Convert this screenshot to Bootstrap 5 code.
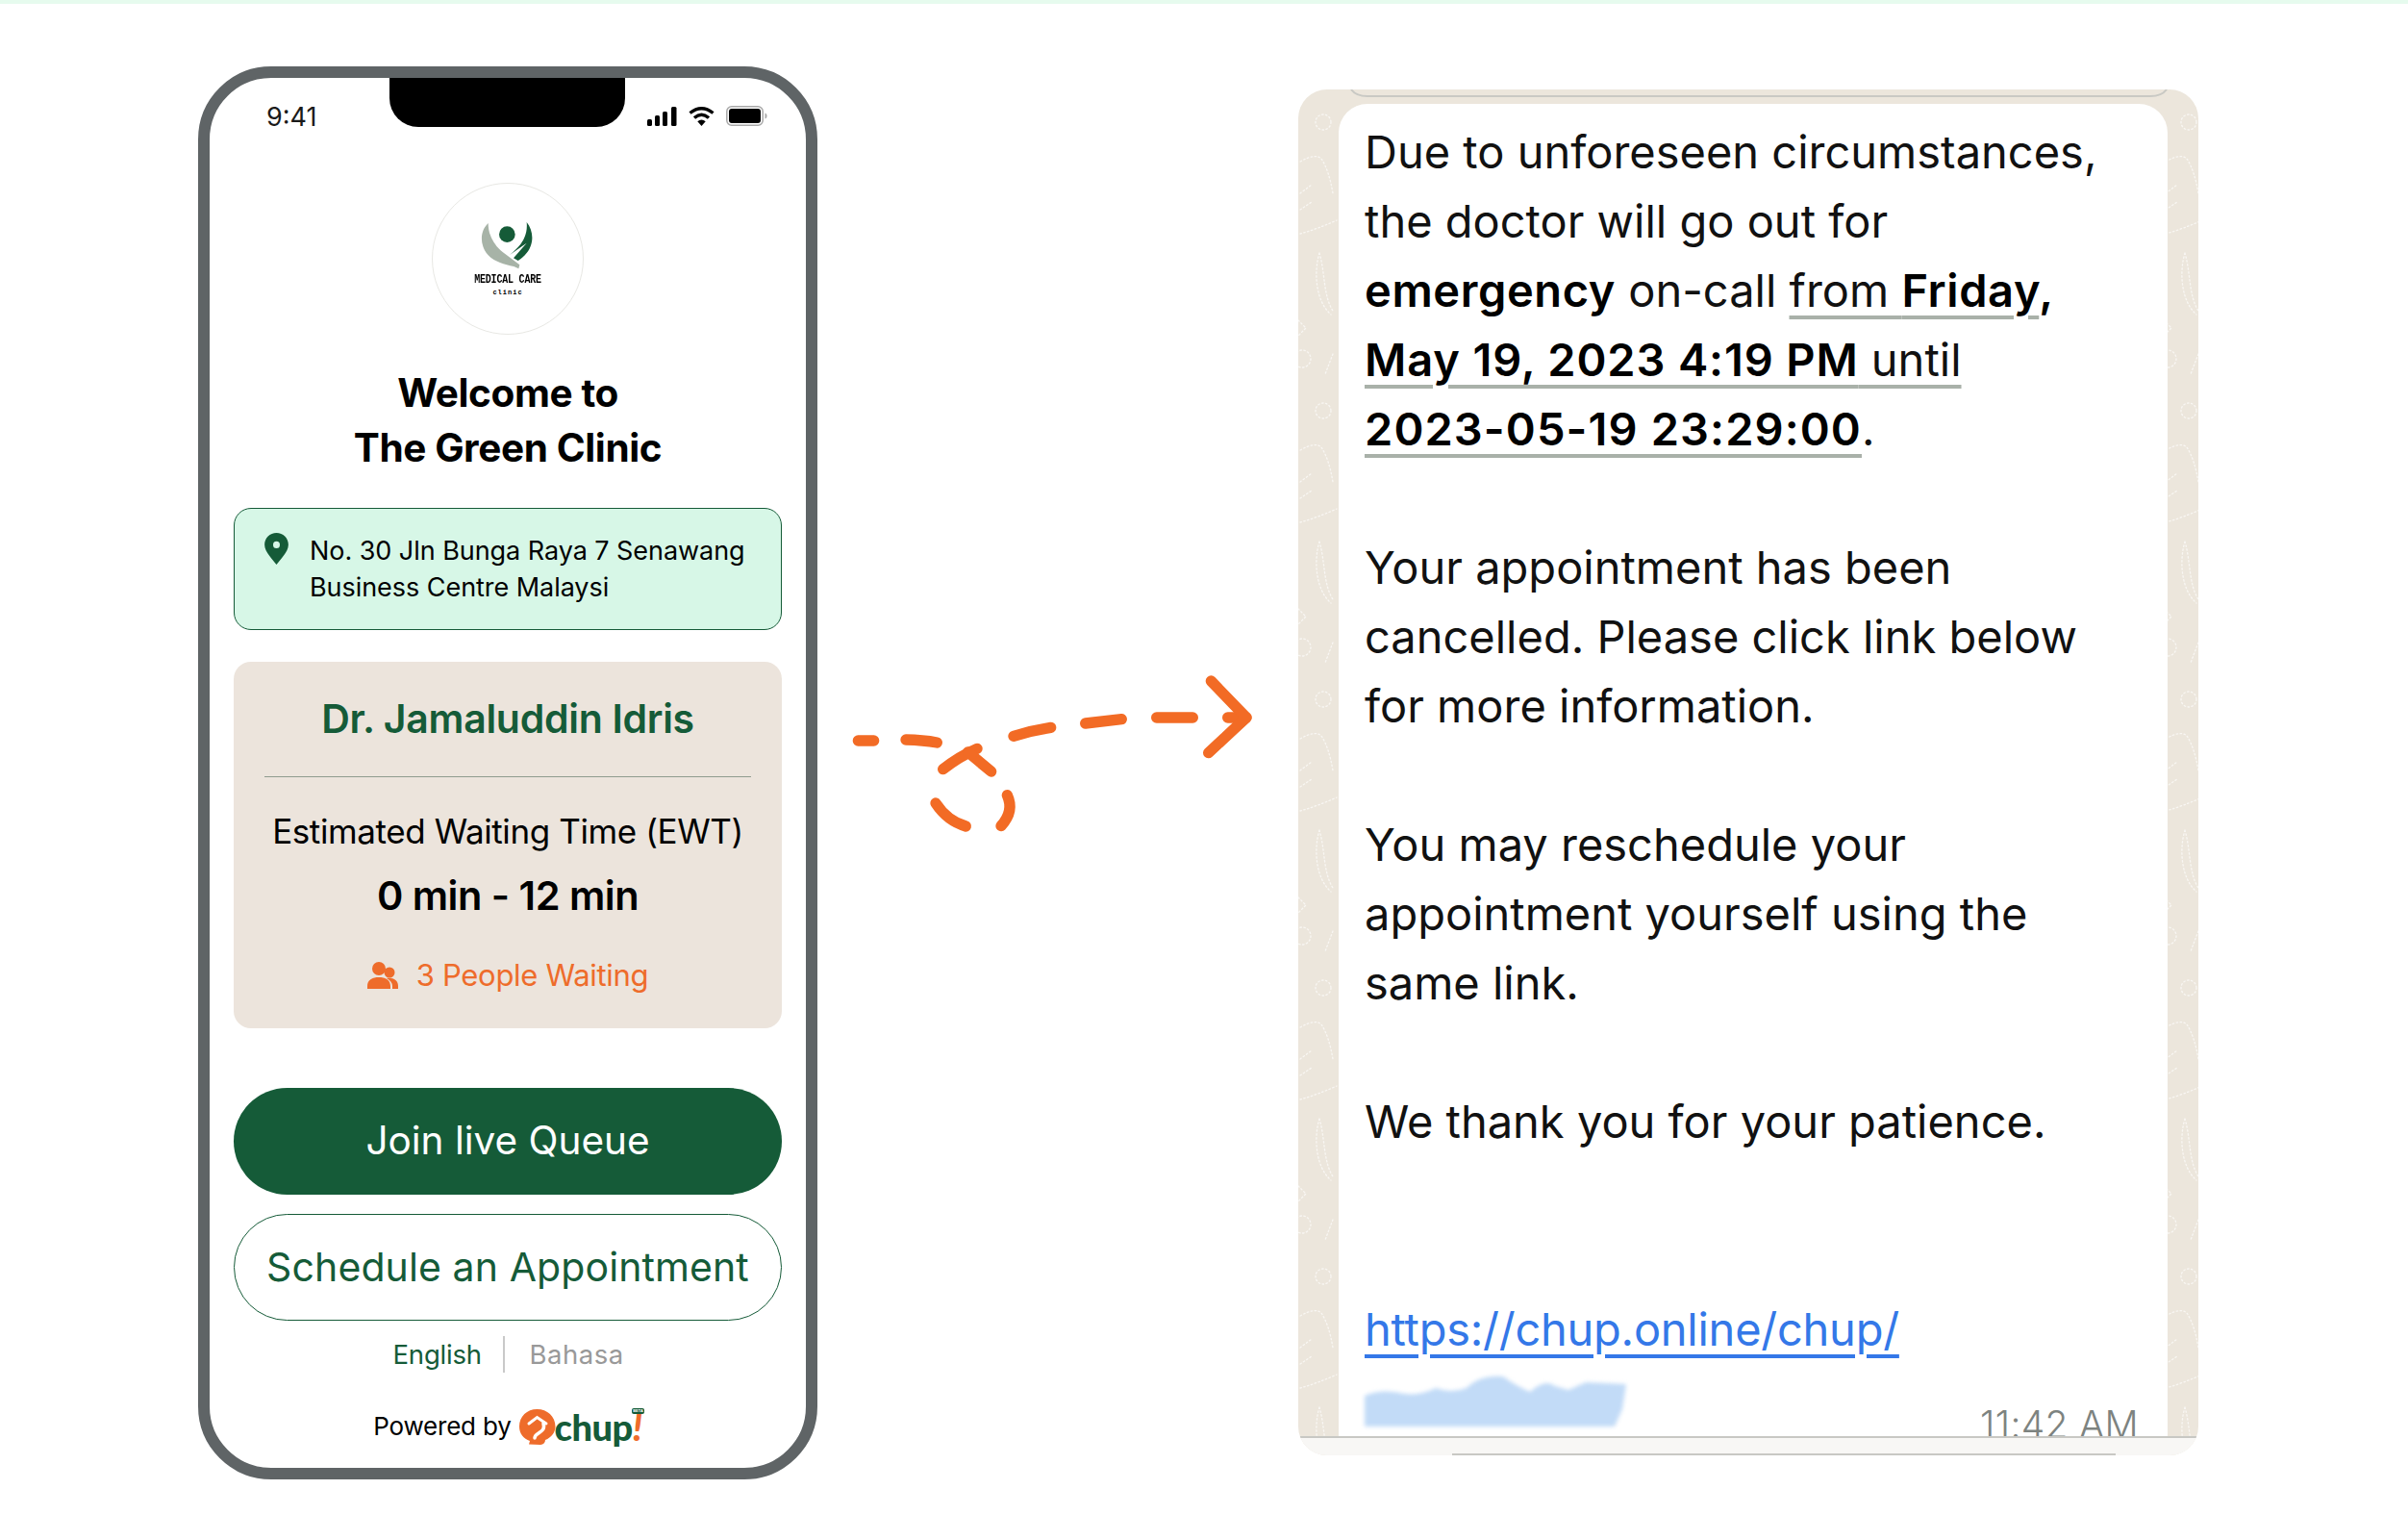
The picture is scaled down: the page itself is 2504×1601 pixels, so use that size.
<!DOCTYPE html>
<html lang="en">
<head>
    <meta charset="UTF-8">
    <meta name="viewport" content="width=device-width, initial-scale=1.0">
    <title>Clinic Queue</title>
    <link href="https://cdn.jsdelivr.net/npm/bootstrap@5.3.1/dist/css/bootstrap.min.css" rel="stylesheet">
    <style>
        body {
            background: #fff;
            border-top: 4px solid #e6fbee;
            font-family: "Inter", "Liberation Sans", sans-serif;
            color: #000;
            min-height: 1601px;
            overflow: hidden;
        }
        .stage { padding: 65px 0 0 206px; }

        /* phone */
        .phone {
            width: 644px;
            height: 1469px;
            border: 12px solid #5f6466;
            border-radius: 76px;
            padding: 0 25px;
            flex-shrink: 0;
            position: relative;
        }
        .notch {
            position: absolute;
            top: 0;
            left: 187px;
            width: 245px;
            height: 51px;
            background: #000;
            border-radius: 0 0 30px 30px;
        }
        .status-row { height: 79px; padding: 25px 15px 0 34px; }
        .status-time { font-size: 27px; line-height: 32px; color: #1a1a1a; }
        .logo-disc {
            width: 158px;
            height: 158px;
            border: 1px solid #e8e8e4;
            border-radius: 50%;
            margin: 30px auto 0;
            padding-top: 36px;
        }
        .logo-name { font-family: "Liberation Mono", monospace; font-weight: 700; font-size: 10px; line-height: 12px; letter-spacing: -.2px; margin-top: 1px; transform: scaleY(1.3); }
        .logo-sub { font-family: "Liberation Mono", monospace; font-weight: 700; font-size: 7px; line-height: 9px; letter-spacing: 1px; margin-top: 3px; }
        .welcome { font-size: 40.5px; line-height: 57px; font-weight: 700; margin: 32px 0 0; letter-spacing: -.4px; }
        .address-box {
            height: 127px;
            margin-top: 34px;
            background: #d7f7e7;
            border: 1.5px solid #155b38;
            border-radius: 18px;
            padding: 25px 20px 0 31px;
            font-size: 27px;
            line-height: 38px;
            letter-spacing: -.05px;
        }
        .address-gap { gap: 22px; }
        .doctor-box {
            height: 381px;
            margin-top: 33px;
            background: #ece4dc;
            border-radius: 18px;
            padding: 0 32px;
        }
        .doctor-name { font-size: 41px; line-height: 46px; font-weight: 600; color: #155b38; padding-top: 36px; letter-spacing: -.3px; margin: 0; }
        .doctor-rule { border-top: 1.5px solid #8f9b8e; opacity: 1; margin: 37px 0 0; }
        .ewt-label { font-size: 35px; line-height: 40px; margin-top: 36px; letter-spacing: -.4px; }
        .ewt-value { font-size: 41.5px; line-height: 50px; font-weight: 600; margin-top: 22px; letter-spacing: -.5px; }
        .waiting { color: #ee6c2b; font-size: 31px; line-height: 38px; margin-top: 39px; letter-spacing: -.3px; gap: 19px; }
        .btn-join, .btn-sched {
            display: block;
            width: 100%;
            height: 111px;
            border-radius: 56px;
            line-height: 1;
        }
        .btn-join { background: #155b38; color: #fff; border: 0; margin-top: 62px; font-size: 40.5px; }
        .btn-sched { background: #fff; color: #155b38; border: 1.5px solid #155b38; margin-top: 20px; font-size: 41px; letter-spacing: .1px; white-space: nowrap; padding: 0; }
        .btn-join:hover { background: #155b38; color: #fff; }
        .btn-sched:hover { background: #fff; color: #155b38; }
        .lang-row { height: 38px; margin-top: 16px; font-size: 27.5px; line-height: 38px; letter-spacing: -.2px; }
        .lang-on { color: #155b38; width: 90px; }
        .lang-off { color: #999; width: 97px; letter-spacing: .5px; }
        .lang-bar { width: 2px; height: 38px; background: #c9c9c9; margin: 0 26px 0 24px; }
        .powered-row { margin-top: 36px; height: 40px; font-size: 26px; line-height: 40px; letter-spacing: -.2px; }
        .chup-word { font-family: "Lato", sans-serif; font-weight: 900; font-size: 38px; line-height: 40px; color: #155b38; letter-spacing: -.5px; margin-left: -1px; }
        .chup-bang { font-family: "Lato", sans-serif; font-style: italic; font-weight: 900; font-size: 38px; line-height: 40px; color: #ee6c2b; position: relative; }
        .chup-beta { position: absolute; top: 1px; left: -1px; background: #155b38; color: #fff; font-size: 4px; line-height: 6px; font-family: "Liberation Sans", sans-serif; font-style: normal; font-weight: 700; padding: 0 1.5px; border-radius: 2px; letter-spacing: 0; }

        /* arrow */
        .arrow-wrap { width: 460px; margin: 591px 0 0 10px; flex-shrink: 0; }

        /* chat panel */
        .chat-panel {
            width: 936px;
            height: 1420px;
            margin: 24px 0 0 30px;
            background: #ece6dc;
            border-radius: 30px;
            position: relative;
            overflow: hidden;
            flex-shrink: 0;
        }
        .chat-doodles { position: absolute; top: 0; left: 0; }
        .chat-bubble {
            position: relative;
            width: 862px;
            height: 1385px;
            margin: 15px 0 0 42px;
            padding: 14px 30px 0 27px;
            background: #fff;
            border-radius: 30px 30px 0 0;
            overflow: hidden;
            font-size: 47px;
            line-height: 72px;
            letter-spacing: 0;
            color: #111;
        }
        .chat-bubble b { font-weight: 600; color: #000; letter-spacing: .6px; }
        .chat-bubble .date-mid b { letter-spacing: .85px; }
        .chat-bubble .date-last b { letter-spacing: 1.1px; }
        .date-line { text-decoration: underline; text-decoration-color: #a9b1a9; text-decoration-thickness: 4px; text-underline-offset: 9px; }
        .chat-link { color: #3478e8; text-decoration: underline; text-decoration-thickness: 4px; text-underline-offset: 9px; letter-spacing: -.25px; }
        .chat-foot { height: 66px; margin-top: 9px; }
        .chat-blur { filter: blur(2px); margin-left: -2px; }
        .chat-time { font-size: 39px; line-height: 38px; font-weight: 300; color: #7d8380; letter-spacing: .3px; margin: 0 0 -7px 0; white-space: nowrap; }
        .chat-floor { position: absolute; left: 0; right: 0; bottom: 0; height: 20px; background: #f8f7f5; border-top: 2px solid #c8c8c4; }
        .chat-floor-line { position: absolute; bottom: 0; left: 160px; width: 690px; height: 2px; background: #c8c8c4; }
    </style>
</head>
<body>
    <div class="stage d-flex align-items-start">

        <!-- phone -->
        <div class="phone">
            <div class="notch"></div>
            <div class="status-row d-flex justify-content-between align-items-start">
                <span class="status-time">9:41</span>
                <div class="d-flex align-items-center gap-2 pt-1">
                    <svg width="31" height="20" viewBox="0 0 31 20"><rect x="0" y="13" width="5" height="7" rx="1.5"/><rect x="8" y="9" width="5" height="11" rx="1.5"/><rect x="16" y="5" width="5" height="15" rx="1.5"/><rect x="25" y="0" width="5.5" height="20" rx="1.5"/></svg>
                    <svg class="ms-1" width="27" height="20" viewBox="0 0 27 20"><path d="M1.5 6.5Q13.5-3 25.5 6.5M6 11.5Q13.5 5 21 11.5" fill="none" stroke="#000" stroke-width="3.4"/><path d="M13.5 20 9.3 15.2Q13.5 12 17.7 15.2Z"/></svg>
                    <svg class="ms-1" width="43" height="21" viewBox="0 0 43 21"><rect x=".8" y=".8" width="37.4" height="19.4" rx="5" fill="none" stroke="#a8a8a8" stroke-width="1.5"/><rect x="3" y="3" width="33" height="15" rx="3"/><path d="M40.5 7.5c1.5.5 2 1.5 2 3s-.5 2.500-2 3z" fill="#a8a8a8"/></svg>
                </div>
            </div>

            <div class="logo-disc d-flex flex-column align-items-center">
                <svg width="64" height="57" viewBox="170 140 192 171">
                    <path d="M205 155C178 180 178 225 205 255 225 275 255 283 285 290L300 297 303 285 250 245C225 225 205 195 205 155Z" fill="#a7b3a7"/>
                    <circle cx="264" cy="190" r="25" fill="#155b38"/>
                    <path d="M325 152C352 185 350 240 298 272L284 264 325 217 272 254C302 230 330 200 325 152Z" fill="#155b38"/>
                </svg>
                <div class="logo-name">MEDICAL CARE</div>
                <div class="logo-sub">clinic</div>
            </div>

            <h1 class="welcome text-center">Welcome to<br>The Green Clinic</h1>

            <div class="address-box d-flex address-gap">
                <svg class="flex-shrink-0" width="25" height="33" viewBox="0 0 24 32"><path fill-rule="evenodd" fill="#155b38" d="M12 0C5.400 0 0 5.200 0 11.800 0 19.400 9 27.400 12 32c3-4.600 12-12.600 12-20.200C24 5.200 18.600 0 12 0zM12 8.600a3.400 3.400 0 1 1 0 6.800 3.400 3.400 0 0 1 0-6.800z"/></svg>
                <div>No. 30 Jln Bunga Raya 7 Senawang<br>Business Centre Malaysi</div>
            </div>

            <div class="doctor-box text-center">
                <h2 class="doctor-name">Dr. Jamaluddin Idris</h2>
                <hr class="doctor-rule">
                <div class="ewt-label">Estimated Waiting Time (EWT)</div>
                <div class="ewt-value">0 min - 12 min</div>
                <div class="waiting d-flex justify-content-center align-items-center">
                    <svg width="32" height="28" viewBox="0 0 32 28" fill="#ee6c2b"><circle cx="12" cy="7" r="7"/><circle cx="23" cy="11" r="5.500"/><path d="M0 28v-3c0-6 5-9 12-9s12 3 12 9v3zM20 17c7-1 12 2 12 8v3h-6v-3c0-3-2-6-6-8z"/></svg>
                    <span>3 People Waiting</span>
                </div>
            </div>

            <button class="btn btn-join" type="button">Join live Queue</button>
            <button class="btn btn-sched" type="button">Schedule an Appointment</button>

            <div class="lang-row d-flex justify-content-center">
                <span class="lang-on text-center">English</span>
                <span class="lang-bar"></span>
                <span class="lang-off text-center">Bahasa</span>
            </div>

            <div class="powered-row d-flex justify-content-center align-items-center">
                <span>Powered by</span>
                <svg class="ms-2 flex-shrink-0" width="38" height="37" viewBox="0 0 38 37">
                    <path d="M18.500 0C8 0 0 7.500 0 18c0 7.500 4.500 13 11 15l-1 3.500 12 .5c3-.5 5-2 5-5 6.500-2.500 10.500-8 10.500-14C37.500 7.500 29 0 18.500 0z" fill="#ee6c2b"/>
                    <path d="M10 15 18.500 8.500 28 15" fill="none" stroke="#fff" stroke-width="3" stroke-linecap="round"/>
                    <path d="M25 15c2 6-2 8-5 10-2.500 1.500-4 3-4 5" fill="none" stroke="#fff" stroke-width="3.500" stroke-linecap="round"/>
                </svg>
                <span class="chup-word">chup</span>
                <span class="chup-bang">!<span class="chup-beta">BETA</span></span>
            </div>
        </div>

        <!-- arrow between the two -->
        <div class="arrow-wrap">
            <svg width="460" height="240" viewBox="0 0 1380 720" fill="none" stroke="#f26b25" stroke-width="34" stroke-linecap="round" stroke-linejoin="round">
                <path d="M97 330H146"/>
                <path d="M246 327Q300 328 343 336"/>
                <path d="M362 419Q410 380 468 355"/>
                <path d="M440 366 512 426"/>
                <path d="M339 525Q375 580 433 597"/>
                <path d="M562 500Q585 550 543 596"/>
                <path d="M582 316Q640 298 698 289"/>
                <path d="M806 276 919 263"/>
                <path d="M1028 258H1141"/>
                <path d="M1250 258H1308"/>
                <path d="M1198 144 1308 258 1190 368"/>
            </svg>
        </div>

        <!-- chat message -->
        <div class="chat-panel">
            <svg class="chat-doodles" width="936" height="1420" fill="none">
                <defs>
                    <pattern id="doodle" width="60" height="300" patternUnits="userSpaceOnUse">
                        <g stroke="#fff" stroke-opacity=".65" stroke-width="1.300" stroke-dasharray="1.500 2.500" stroke-linecap="round">
                            <circle cx="26" cy="34" r="8"/>
                            <path d="M2 75Q18 66 24 72 32 84 36 108"/>
                            <path d="M2 108 14 99 M2 125 14 117"/>
                            <path d="M2 150Q20 145 40 136"/>
                            <path d="M22 170C16 190 18 220 34 234M22 170C28 190 26 215 36 230"/>
                            <path d="M0 240 8 248 0 256"/>
                            <circle cx="4" cy="280" r="9"/>
                            <path d="M36 275 28 296"/>
                        </g>
                    </pattern>
                </defs>
                <rect width="44" height="1420" fill="url(#doodle)"/>
                <rect x="904" width="32" height="1420" fill="url(#doodle)"/>
                <path d="M55 0Q60 7 72 7H886Q898 7 903 0" stroke="#c9c9c4" stroke-width="2"/>
            </svg>

            <div class="chat-bubble">
                Due to unforeseen circumstances,<br>
                the doctor will go out for<br>
                <b>emergency</b> on-call <span class="date-line">from <b>Friday</b></span><b>,</b><br>
                <span class="date-line date-mid"><b>May 19, 2023 4:19 PM</b> until</span><br>
                <span class="date-line date-last"><b>2023-05-19 23:29:00</b></span>.<br>
                <br>
                Your appointment has been<br>
                cancelled. Please click link below<br>
                for more information.<br>
                <br>
                You may reschedule your<br>
                appointment yourself using the<br>
                same link.<br>
                <br>
                We thank you for your patience.<br>
                <br>
                <br>
                <a class="chat-link" href="#">https://chup.online/chup/</a>
                <div class="chat-foot d-flex justify-content-between align-items-end">
                    <svg class="chat-blur flex-shrink-0 align-self-start" width="276" height="56" viewBox="0 0 276 56"><path d="M2 56V24Q20 16 44 22 60 24 76 16 92 22 108 16 122 2 146 4 160 14 174 20 190 6 200 14L214 18 232 10 274 12 270 38 262 56Z" fill="#c2dbf7"/></svg>
                    <span class="chat-time">11:42 AM</span>
                </div>
            </div>
            <div class="chat-floor"><div class="chat-floor-line"></div></div>
        </div>
    </div>

    <script src="https://cdn.jsdelivr.net/npm/bootstrap@5.3.1/dist/js/bootstrap.bundle.min.js"></script>
</body>
</html>
